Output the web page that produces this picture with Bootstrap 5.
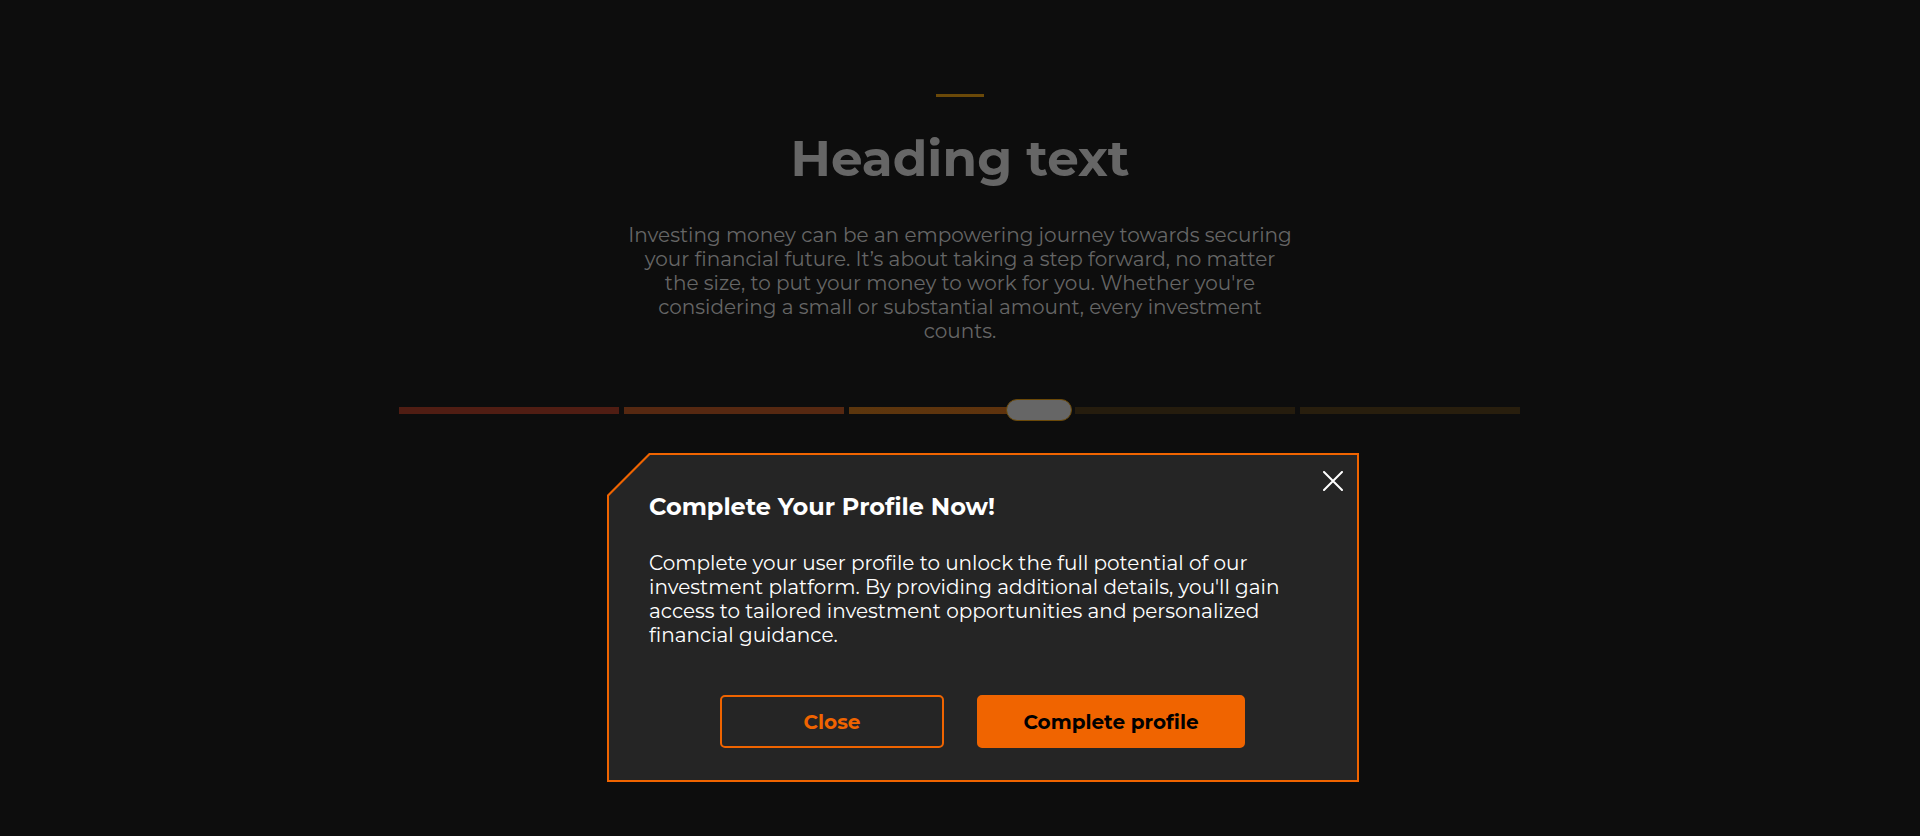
<!DOCTYPE html>
<html lang="en">
<head>
<meta charset="utf-8">
<meta name="viewport" content="width=device-width, initial-scale=1">
<title>Complete your profile</title>
<link rel="stylesheet" href="https://cdn.jsdelivr.net/npm/bootstrap@5.3.0/dist/css/bootstrap.min.css">
<style>
  :root { --accent: #f06400; --panel: #252525; --page: #0d0d0d; --muted: #666; }
  body { background: var(--page); color: var(--muted); font-family: Montserrat, Inter, "Open Sans", sans-serif; font-size: 20px; line-height: 24px; }
  .hero { padding-top: 94px; }
  .accent-rule { width: 48px; height: 3px; background: #6b4908; }
  .hero-title { margin: 32px 0 34px; font-size: 50px; line-height: 60px; font-weight: 700; }
  .steps { max-width: 1122px; height: 22px; margin-top: 56px; padding-right: 1px; }
  .track { gap: 5px; }
  .step { flex: 1; height: 7px; }
  .step-1 { background: #501d13; }
  .step-2 { background: #562811; }
  .step-3 { background: linear-gradient(90deg, #5c360d, #5f310d); }
  .step-4 { background: #251c0d; }
  .step-5 { background: #281e0d; }
  .slider { appearance: none; background: none; inset: 0; height: 22px; }
  .slider::-webkit-slider-thumb { appearance: none; width: 66px; height: 22px; border: 1px solid #6b4908; border-radius: 11px; background: var(--muted); }
  .slider::-moz-range-thumb { width: 64px; height: 20px; border: 1px solid #6b4908; border-radius: 11px; background: var(--muted); }
  .prompt { max-width: 752px; margin-top: 32px; padding: 40px 43px 34px 42px; left: 23px; color: #fff; background: var(--accent); clip-path: polygon(42px 0, 100% 0, 100% 100%, 0 100%, 0 42px); }
  .prompt::before { content: ""; position: absolute; z-index: -1; inset: 2px; background: var(--panel); clip-path: polygon(41px 0, 100% 0, 100% 100%, 0 100%, 0 41px); }
  .prompt-title { font-size: 24px; line-height: 28px; font-weight: 700; margin-bottom: 30px; }
  .dismiss { top: 14px; right: 12px; width: 28px; height: 28px; }
  .actions { gap: 33px; margin-top: 48px; }
  .actions .btn { height: 53px; font-size: 20px; font-weight: 700; border: 2px solid var(--accent); border-radius: 5px; }
  .btn-quiet { width: 224px; color: var(--accent); }
  .btn-main { width: 268px; color: #000; background: var(--accent); }
</style>
</head>
<body>
<main class="hero container-fluid d-flex flex-column align-items-center">
  <div class="accent-rule"></div>
  <h1 class="hero-title text-center">Heading text</h1>
  <p class="text-center mb-0">Investing money can be an empowering journey towards securing<br>your financial future. It’s about taking a step forward, no matter<br>the size, to put your money to work for you. Whether you're<br>considering a small or substantial amount, every investment<br>counts.</p>
  <div class="steps position-relative w-100 d-flex align-items-center">
    <div class="track d-flex w-100">
      <div class="step step-1"></div><div class="step step-2"></div><div class="step step-3"></div><div class="step step-4"></div><div class="step step-5"></div>
    </div>
    <input class="slider position-absolute w-100 m-0" type="range" min="0" max="1056" value="607" aria-label="Investment amount">
  </div>
  <section class="prompt position-relative w-100 z-0" role="dialog" aria-labelledby="prompt-title">
    <button type="button" class="dismiss btn p-0 border-0 position-absolute d-flex align-items-center justify-content-center" aria-label="Close dialog">
      <svg width="20" height="20" viewBox="0 0 20 20" fill="none" stroke="#fff" stroke-width="2" stroke-linecap="round"><path d="M1 1 19 19M19 1 1 19"/></svg>
    </button>
    <h2 class="prompt-title" id="prompt-title">Complete Your Profile Now!</h2>
    <p class="mb-0">Complete your user profile to unlock the full potential of our<br>investment platform. By providing additional details, you'll gain<br>access to tailored investment opportunities and personalized<br>financial guidance.</p>
    <div class="actions d-flex justify-content-center">
      <button type="button" class="btn btn-quiet">Close</button>
      <button type="button" class="btn btn-main">Complete profile</button>
    </div>
  </section>
</main>
<script src="https://cdn.jsdelivr.net/npm/bootstrap@5.3.0/dist/js/bootstrap.bundle.min.js"></script>
</body>
</html>
